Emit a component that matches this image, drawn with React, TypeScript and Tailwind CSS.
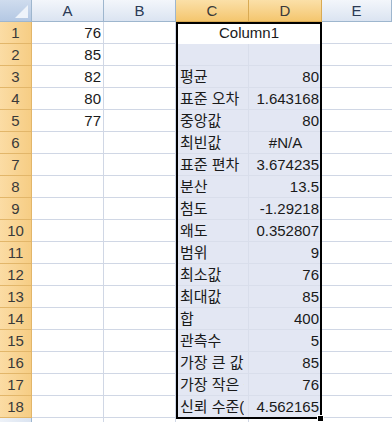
import React from 'react';

const cols = ['A', 'B', 'C', 'D', 'E'];
const colA: Record<number, string> = { 1: '76', 2: '85', 3: '82', 4: '80', 5: '77' };

const stats: [string, string][] = [
  ['', ''],
  ['평균', '80'],
  ['표준 오차', '1.643168'],
  ['중앙값', '80'],
  ['최빈값', '#N/A'],
  ['표준 편차', '3.674235'],
  ['분산', '13.5'],
  ['첨도', '-1.29218'],
  ['왜도', '0.352807'],
  ['범위', '9'],
  ['최소값', '76'],
  ['최대값', '85'],
  ['합', '400'],
  ['관측수', '5'],
  ['가장 큰 값(1)', '85'],
  ['가장 작은 값(1)', '76'],
  ['신뢰 수준(95.0%)', '4.562165'],
];

const rows = Array.from({ length: 18 }, (_, i) => i + 1);

export default function App() {
  return (
    <div
      className="relative w-[392px] h-[422px] overflow-hidden bg-white text-[15px] leading-[22px] text-[#1a1a1a]"
      style={{ fontFamily: '"Liberation Sans", "Noto Sans CJK KR", sans-serif' }}
    >
      <div className="grid grid-cols-[32px_72px_72px_73px_73px_70px] auto-rows-[22px]">
        {/* header row */}
        <div className="relative border-r border-b border-[#9eb6ce] bg-gradient-to-b from-[#cfdcee] to-[#b4c8e3]">
          <div className="absolute right-[3px] bottom-[3px] w-0 h-0 border-l-[13px] border-l-transparent border-b-[13px] border-b-[#eef3fa]" />
        </div>
        {cols.map((c) => {
          const sel = c === 'C' || c === 'D';
          return (
            <div
              key={c}
              className={
                sel
                  ? 'text-center text-[#3a3a3a] border-r border-b border-[#d9aa53] bg-gradient-to-b from-[#fbe0a8] to-[#f4c66e]'
                  : 'text-center text-[#2a3a55] border-r border-b border-[#9eb6ce] bg-gradient-to-b from-[#f3f6fb] to-[#dbe4f1]'
              }
            >
              {c}
            </div>
          );
        })}

        {rows.map((r) => {
          const st = r >= 2 ? stats[r - 2] : null;
          return (
            <React.Fragment key={r}>
              <div className="text-center text-[#3a3a3a] border-r border-b border-[#e2b66a] bg-gradient-to-r from-[#fbdca4] to-[#f6cd84]">
                {r}
              </div>
              <div className="border-r border-b border-[#d0d7e5] text-right pr-[2px]">{colA[r] ?? ''}</div>
              <div className="border-r border-b border-[#d0d7e5]" />
              {r === 1 ? (
                <div className="col-span-2 bg-white border-b border-white text-center">Column1</div>
              ) : (
                <>
                  <div className="bg-[#e3e7f3] border-r border-b border-[#d9deeb] pl-[4px]">
                    <div className="w-[64px] whitespace-nowrap overflow-hidden">{st?.[0]}</div>
                  </div>
                  <div
                    className={
                      'bg-[#e3e7f3] border-b border-[#d9deeb] whitespace-nowrap ' +
                      (st?.[1] === '#N/A' ? 'text-center' : 'text-right pr-[3px]')
                    }
                  >
                    {st?.[1]}
                  </div>
                </>
              )}
              <div className="border-b border-[#d0d7e5]" />
            </React.Fragment>
          );
        })}

        {/* partial row 19 */}
        <div className="border-r border-[#9eb6ce] bg-gradient-to-r from-[#eef2f8] to-[#dbe4f1]" />
        <div className="border-r border-[#d0d7e5]" />
        <div className="border-r border-[#d0d7e5]" />
        <div className="border-r border-[#d0d7e5]" />
        <div className="border-r border-[#d0d7e5]" />
        <div />
      </div>

      {/* selection border */}
      <div className="absolute left-[176px] top-[22px] w-[146px] h-[397px] border-2 border-black pointer-events-none" />
      {/* fill handle */}
      <div className="absolute left-[317px] top-[415px] w-[7px] h-[7px] bg-black border border-white" />
    </div>
  );
}
